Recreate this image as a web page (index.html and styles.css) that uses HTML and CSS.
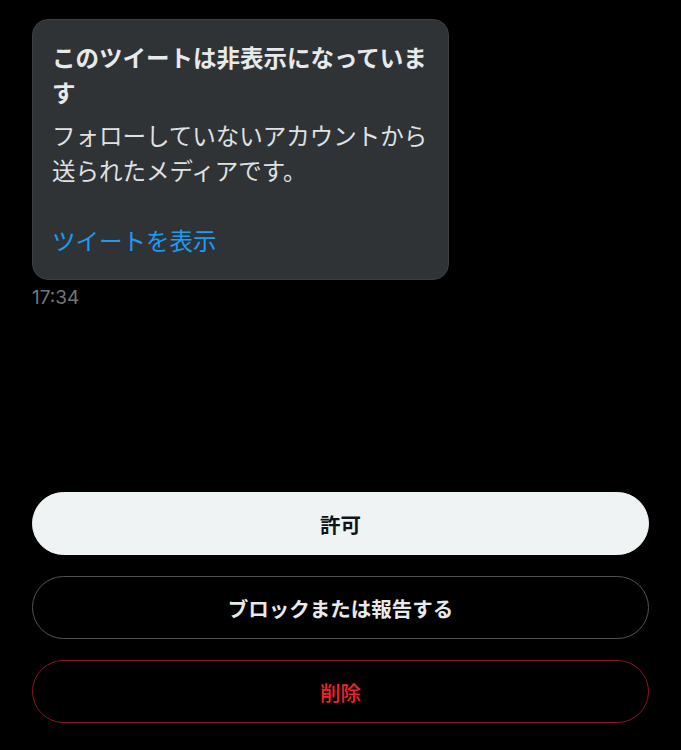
FILE: index.html
```html
<!DOCTYPE html>
<html lang="ja">
<head>
<meta charset="utf-8">
<link rel="stylesheet" href="styles.css">
</head>
<body>
<main class="page">
  <section class="message">
    <div class="bubble">
      <p class="title">このツイートは非表示になっています</p>
      <p class="desc">フォローしていないアカウントから送られたメディアです。</p>
      <a class="link" href="#">ツイートを表示</a>
    </div>
    <div class="time">17:34</div>
  </section>
  <section class="actions">
    <button class="btn btn-allow">許可</button>
    <button class="btn btn-block">ブロックまたは報告する</button>
    <button class="btn btn-delete">削除</button>
  </section>
</main>
</body>
</html>
```

FILE: styles.css
```css
html, body {
  margin: 0;
  padding: 0;
  background: #000;
}
body {
  font-family: "Noto Sans CJK JP", "Noto Sans", sans-serif;
  color: #e7e9ea;
}
.page {
  padding: 19px 32px 0 32px;
  display: flex;
  flex-direction: column;
}
.message {
  display: flex;
  flex-direction: column;
  align-items: flex-start;
}
.bubble {
  box-sizing: border-box;
  width: 417px;
  background: #303336;
  border: 1px solid #3d4043;
  border-radius: 16px;
  padding: 20px 19px 21px 19px;
  display: flex;
  flex-direction: column;
}
.title {
  margin: 0;
  font-size: 23.5px;
  line-height: 35px;
  font-weight: 700;
  color: #e7e9ea;
}
.desc {
  margin: 8px 0 0 0;
  font-size: 23.5px;
  line-height: 35px;
  font-weight: 400;
  color: #dfe1e2;
}
.link {
  margin-top: 35px;
  font-size: 23.5px;
  line-height: 35px;
  color: #1d9bf0;
  text-decoration: none;
}
.time {
  margin-top: 7px;
  font-family: "Inter", "Liberation Sans", sans-serif;
  font-size: 19px;
  line-height: 22px;
  color: #71767b;
}
.actions {
  margin-top: 183px;
  display: flex;
  flex-direction: column;
  gap: 21px;
}
.btn {
  box-sizing: border-box;
  height: 63px;
  width: 100%;
  border-radius: 32px;
  font-family: "Noto Sans CJK JP", "Noto Sans", sans-serif;
  font-size: 20.5px;
  font-weight: 700;
  padding: 0;
  cursor: pointer;
}
.btn-allow {
  background: #eff3f4;
  border: 1px solid #eff3f4;
  color: #0f1419;
}
.btn-block {
  background: #000;
  border: 1.5px solid #505457;
  color: #e7e9ea;
}
.btn-delete {
  background: #000;
  border: 1.5px solid #8c1820;
  color: #f4212e;
  font-weight: 500;
}
```
